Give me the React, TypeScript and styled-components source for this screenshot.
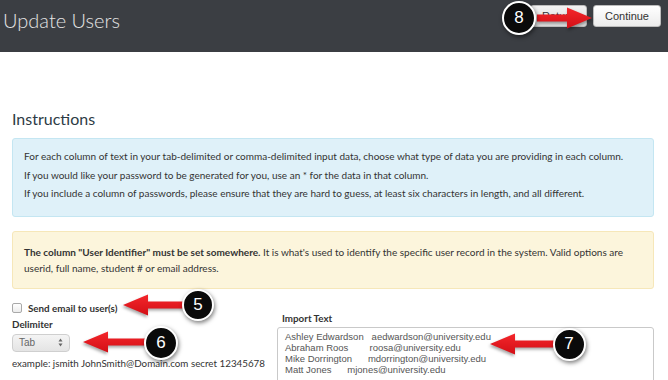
import React from 'react';
import styled, {createGlobalStyle} from 'styled-components';

const GlobalStyle = createGlobalStyle`
  html, body {
    margin: 0;
    padding: 0;
    background: #fff;
  }
  body {
    font-family: Lato, 'Open Sans', 'Liberation Sans', sans-serif;
    color: #333;
  }
`;

const IMPORT_LINES = [
  'Ashley Edwardson   aedwardson@university.edu',
  'Abraham Roos        roosa@university.edu',
  'Mike Dorrington      mdorrington@university.edu',
  'Matt Jones      mjones@university.edu',
];

type ArrowProps = {
  x: number;
  y: number;
  length: number;
  dir: 'left' | 'right';
};

const Arrow: React.FC<ArrowProps> = ({x, y, length, dir}) => {
  const head = 25;
  return (
    <ArrowSvg
      $x={x}
      $y={y}
      width={length}
      height={24}
      viewBox={`0 0 ${length} 24`}
      $flip={dir === 'left'}
    >
      <defs>
        <linearGradient id={`ag-${x}-${y}`} x1="0" y1="0" x2="0" y2="1">
          <stop offset="0" stopColor="#f4262b" />
          <stop offset="1" stopColor="#d30f16" />
        </linearGradient>
      </defs>
      <path
        d={`M0 8.5 L${length - head} 8.5 L${length - head} 1.5 L${length} 12 L${length - head} 22.5 L${length - head} 15.5 L0 15.5 Z`}
        fill={`url(#ag-${x}-${y})`}
      />
    </ArrowSvg>
  );
};

type CalloutProps = {x: number; y: number; n: number; size?: number};

const Callout: React.FC<CalloutProps> = ({x, y, n, size = 33}) => (
  <Bubble $x={x} $y={y} $size={size}>
    {n}
  </Bubble>
);

export default function App() {
  return (
    <>
      <GlobalStyle />
      <Page>
        <Header>
          <Title>Update Users</Title>
          <HeaderActions>
            <Button $muted>Return</Button>
            <Button>Continue</Button>
          </HeaderActions>
        </Header>

        <Content>
          <Heading>Instructions</Heading>
          <InfoBox>
            <p>
              For each column of text in your tab-delimited or comma-delimited
              input data, choose what type of data you are providing in each
              column.
            </p>
            <p>
              If you would like your password to be generated for you, use an *
              for the data in that column.
            </p>
            <p>
              If you include a column of passwords, please ensure that they are
              hard to guess, at least six characters in length, and all
              different.
            </p>
          </InfoBox>

          <WarnBox>
            <strong>
              The column "User Identifier" must be set somewhere.
            </strong>{' '}
            It is what's used to identify the specific user record in the
            system. Valid options are userid, full name, student # or email
            address.
          </WarnBox>

          <Columns>
            <LeftCol>
              <CheckRow>
                <CheckBox />
                <BoldLabel>Send email to user(s)</BoldLabel>
              </CheckRow>
              <BoldLabel>Delimiter</BoldLabel>
              <Select>
                <span>Tab</span>
                <Stepper>
                  <svg width="5" height="9" viewBox="0 0 5 9">
                    <path d="M2.5 0.5 L4.5 3.5 L0.5 3.5 Z" fill="#666" />
                    <path d="M2.5 8.5 L4.5 5.5 L0.5 5.5 Z" fill="#666" />
                  </svg>
                </Stepper>
              </Select>
              <Example>
                example: jsmith JohnSmith@Domain.com secret 12345678
              </Example>
            </LeftCol>

            <RightCol>
              <BoldLabel>Import Text</BoldLabel>
              <ImportArea>
                {IMPORT_LINES.map(line => (
                  <ImportLine key={line}>{line}</ImportLine>
                ))}
              </ImportArea>
            </RightCol>
          </Columns>
        </Content>

        <Arrow x={537} y={6} length={55} dir="right" />
        <Callout x={519} y={18} n={8} size={34} />

        <Arrow x={123} y={293} length={62} dir="left" />
        <Callout x={198} y={305} n={5} size={32} />

        <Arrow x={83} y={330} length={64} dir="left" />
        <Callout x={161} y={343} n={6} size={34} />

        <Arrow x={490} y={332} length={65} dir="left" />
        <Callout x={569} y={344} n={7} size={33} />
      </Page>
    </>
  );
}

const Page = styled.div`
  position: relative;
  width: 668px;
  height: 380px;
  overflow: hidden;
`;

const Header = styled.header`
  display: flex;
  justify-content: space-between;
  align-items: flex-start;
  height: 52px;
  padding: 0 7px 0 3px;
  background: #3b3e43;
`;

const Title = styled.h1`
  margin: 8px 0 0;
  font-size: 20px;
  font-weight: 300;
  line-height: 24px;
  color: #e4e4e4;
`;

const HeaderActions = styled.div`
  display: flex;
  gap: 6px;
  margin-top: 5px;
`;

const Button = styled.button<{$muted?: boolean}>`
  height: 22px;
  padding: 0 11px;
  border: 1px solid #bdbdbd;
  border-radius: 3px;
  background: ${p =>
    p.$muted
      ? 'linear-gradient(#f2f2f2, #dcdcdc)'
      : 'linear-gradient(#ffffff, #ececec)'};
  font-family: 'Liberation Sans', Arial, sans-serif;
  font-size: 11px;
  color: #333;
`;

const Content = styled.main`
  padding: 0 14px 0 12px;
`;

const Heading = styled.h2`
  margin: 57px 0 0;
  font-size: 16px;
  font-weight: 400;
  line-height: 20px;
  color: #2d3b45;
`;

const InfoBox = styled.div`
  margin-top: 9px;
  padding: 8px 11px 13px;
  border: 1px solid #c4e6f2;
  border-radius: 3px;
  background: #dff1f9;
  font-size: 10px;
  line-height: 18.5px;
  color: #333;

  p {
    margin: 0;
  }
`;

const WarnBox = styled.div`
  margin-top: 14px;
  padding: 12px 30px 12px 11px;
  border: 1px solid #f6e7b9;
  border-radius: 3px;
  background: #fcf5dc;
  font-size: 10px;
  line-height: 16px;
  color: #333;

  strong {
    font-weight: 700;
  }
`;

const Columns = styled.div`
  display: grid;
  grid-template-columns: 270px 1fr;
`;

const LeftCol = styled.div`
  display: flex;
  flex-direction: column;
  align-items: flex-start;
  padding-top: 12px;
`;

const RightCol = styled.div`
  display: flex;
  flex-direction: column;
  padding-top: 22px;
`;

const CheckRow = styled.label`
  display: flex;
  align-items: center;
  gap: 6px;
  margin-bottom: 2px;
`;

const CheckBox = styled.span`
  width: 8px;
  height: 8px;
  border: 1px solid #a9a9a9;
  border-radius: 2px;
  background: linear-gradient(#fff, #ececec);
`;

const BoldLabel = styled.span`
  font-size: 9.8px;
  font-weight: 700;
  line-height: 14px;
  color: #333;
`;

const Select = styled.div`
  display: flex;
  align-items: center;
  justify-content: space-between;
  box-sizing: border-box;
  width: 58px;
  height: 18px;
  margin-top: 3px;
  padding: 0 6px 0 6px;
  border: 1px solid #cfcfcf;
  border-radius: 4px;
  background: linear-gradient(#f4f4f4, #e4e4e4);
  font-family: 'Liberation Sans', Arial, sans-serif;
  font-size: 10px;
  color: #666;
`;

const Stepper = styled.span`
  display: flex;
  align-items: center;
`;

const Example = styled.div`
  margin-top: 4px;
  font-size: 9.8px;
  line-height: 14px;
  color: #333;
`;

const ImportArea = styled.div`
  margin-top: 2px;
  margin-left: -5px;
  height: 60px;
  padding: 3px 7px;
  border: 1px solid #c9c9c9;
  border-radius: 3px;
  background: #fff;
  font-family: 'Liberation Sans', Arial, sans-serif;
  font-size: 9.5px;
  line-height: 11.3px;
  color: #555;
`;

const ImportLine = styled.div`
  white-space: pre;
`;

const ArrowSvg = styled.svg<{$x: number; $y: number; $flip: boolean}>`
  position: absolute;
  left: ${p => p.$x}px;
  top: ${p => p.$y}px;
  transform: ${p => (p.$flip ? 'scaleX(-1)' : 'none')};
  filter: drop-shadow(1px 2px 1.5px rgba(0, 0, 0, 0.35));
  overflow: visible;
`;

const Bubble = styled.div<{$x: number; $y: number; $size: number}>`
  position: absolute;
  left: ${p => p.$x - p.$size / 2}px;
  top: ${p => p.$y - p.$size / 2}px;
  display: flex;
  align-items: center;
  justify-content: center;
  box-sizing: border-box;
  width: ${p => p.$size}px;
  height: ${p => p.$size}px;
  border: 2.5px solid #fff;
  border-radius: 50%;
  background: #0a0a0a;
  box-shadow: 1px 2px 4px rgba(0, 0, 0, 0.5);
  font-family: 'Liberation Sans', Arial, sans-serif;
  font-size: 17px;
  color: #fff;
`;
